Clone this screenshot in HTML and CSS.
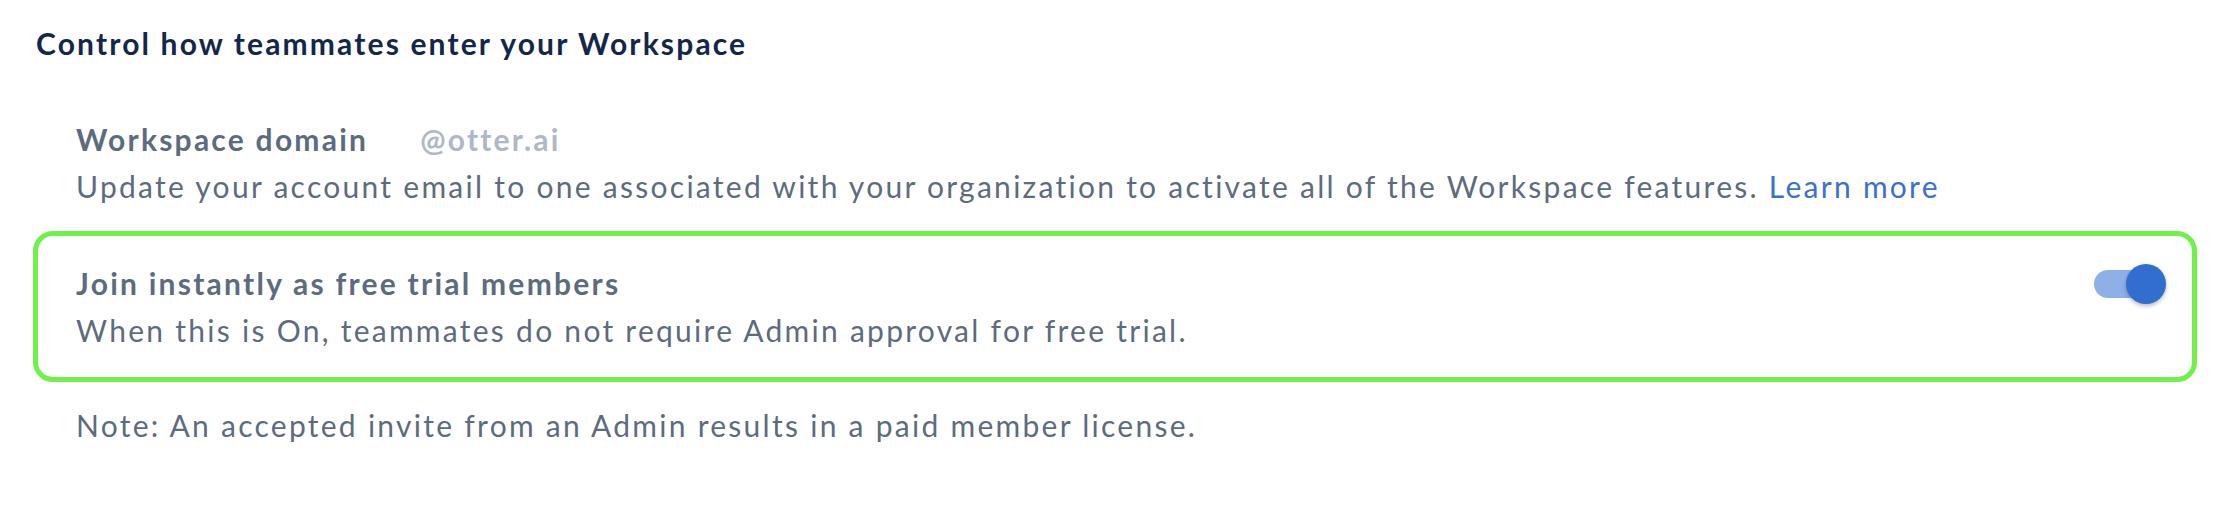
FILE: index.html
```html
<!DOCTYPE html>
<html lang="en">
<head>
<meta charset="utf-8">
<title>Workspace settings</title>
<link rel="stylesheet" href="styles.css">
</head>
<body>
<main class="page">
  <h2 class="title">Control how teammates enter your Workspace</h2>
  <section class="domain">
    <div class="domain-head">
      <span class="label">Workspace domain</span>
      <span class="domain-value">@otter.ai</span>
    </div>
    <p class="desc">Update your account email to one associated with your organization to activate all of the Workspace features. <a class="link" href="#">Learn more</a></p>
  </section>
  <section class="option">
    <div class="option-text">
      <div class="label">Join instantly as free trial members</div>
      <p class="desc">When this is On, teammates do not require Admin approval for free trial.</p>
    </div>
    <div class="toggle-wrap">
      <span class="toggle" role="switch" aria-checked="true"><span class="knob"></span></span>
    </div>
  </section>
  <p class="desc note">Note: An accepted invite from an Admin results in a paid member license.</p>
</main>
</body>
</html>
```
FILE: styles.css
```css
html, body {
  margin: 0;
  padding: 0;
  background: #ffffff;
}
body {
  font-family: Lato, "Open Sans", sans-serif;
  font-size: 30px;
  line-height: 47px;
  letter-spacing: 2.27px;
  color: #5d6b7f;
}
.page {
  padding: 20px 17px 0 36px;
}
.title {
  margin: 0;
  font-size: 30px;
  font-weight: 700;
  line-height: 47px;
  letter-spacing: 2.15px;
  color: #13274a;
}
.domain {
  margin-top: 49px;
  padding-left: 40px;
}
.domain-head {
  display: flex;
  gap: 52px;
}
.label {
  font-weight: 700;
  letter-spacing: 2.25px;
  color: #5d6b7f;
}
.domain-value {
  color: #aeb8c6;
  font-weight: 700;
  letter-spacing: 2.2px;
}
.desc {
  margin: 0;
  font-weight: 400;
}
.link {
  color: #3a70d6;
  text-decoration: none;
}
.option {
  margin-top: 21px;
  margin-left: -3px;
  border: 5px solid #6ff04b;
  border-radius: 20px;
  padding: 24px 30px 23px 38px;
  display: flex;
  justify-content: space-between;
  align-items: flex-start;
}
.toggle-wrap {
  height: 47px;
  display: flex;
  align-items: center;
}
.toggle {
  position: relative;
  display: block;
  width: 68px;
  height: 28px;
  border-radius: 14px;
  background: #8fb0e6;
}
.knob {
  position: absolute;
  top: -6px;
  right: -4px;
  width: 40px;
  height: 40px;
  border-radius: 50%;
  background: #326ecf;
  box-shadow: 0 2px 4px rgba(0, 0, 0, 0.28);
}
.note {
  margin-top: 20px;
  padding-left: 40px;
}
```
